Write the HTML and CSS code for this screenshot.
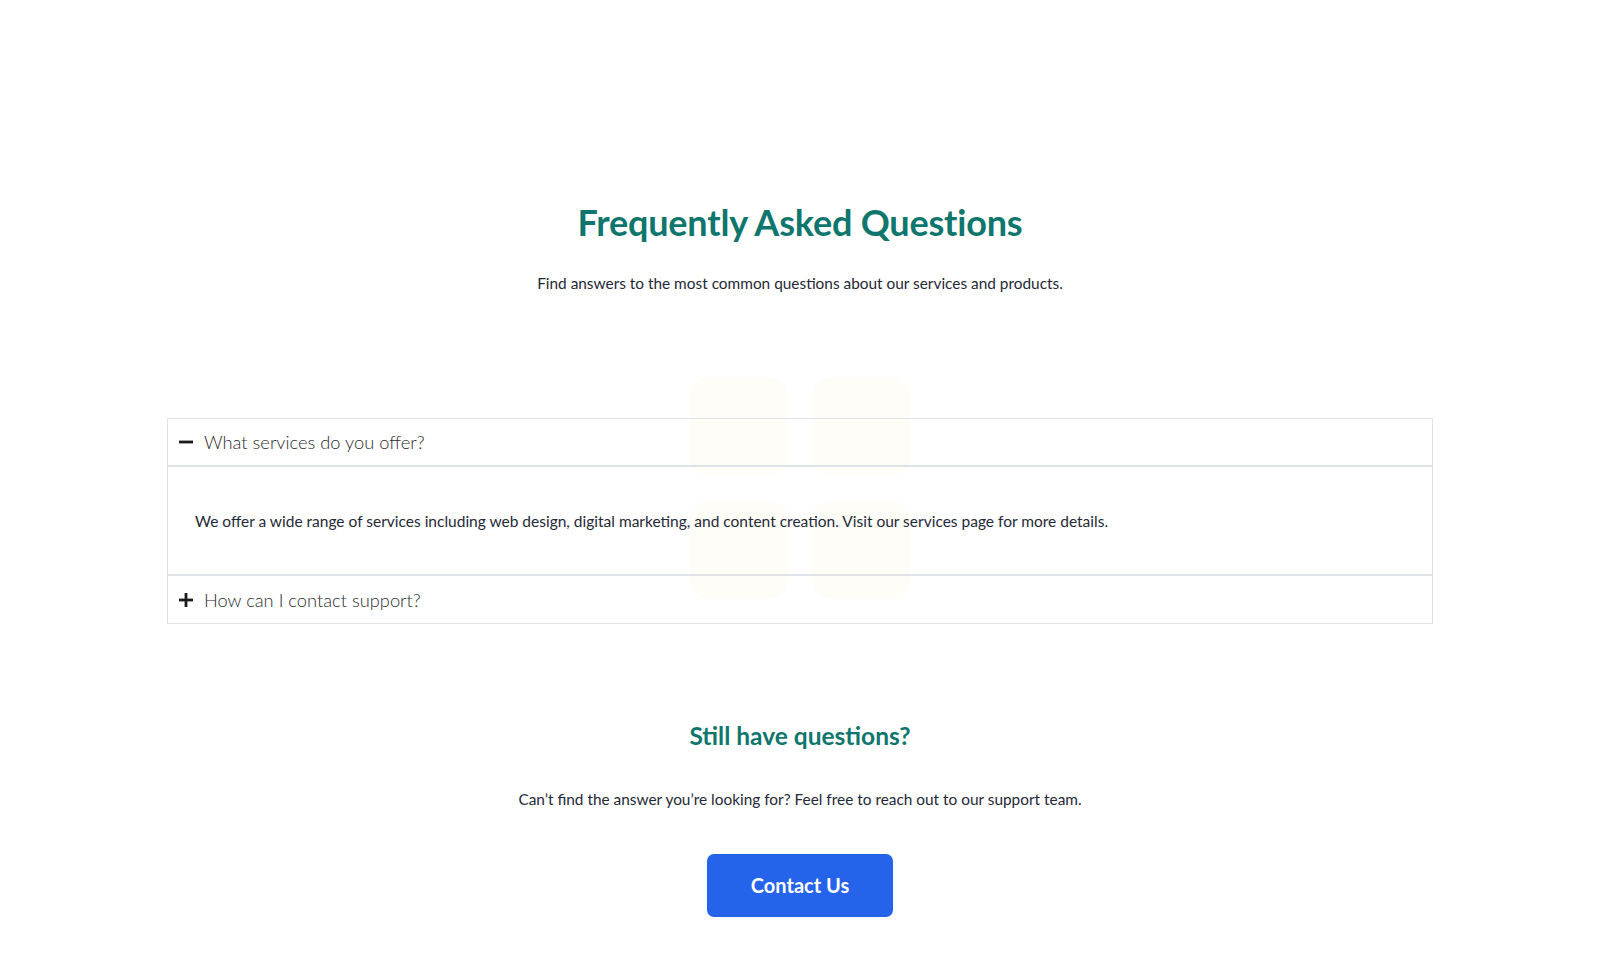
FILE: index.html
```html
<!DOCTYPE html>
<html lang="en">
<head>
<meta charset="utf-8">
<title>FAQ</title>
<link rel="stylesheet" href="styles.css">
</head>
<body>
<main class="page">
  <header class="intro">
    <h1 class="title">Frequently Asked Questions</h1>
    <p class="lead">Find answers to the most common questions about our services and products.</p>
  </header>

  <section class="faq">
    <div class="decor" aria-hidden="true">
      <span></span><span></span><span></span><span></span>
    </div>
    <div class="item open">
      <div class="q">
        <svg class="ico" viewBox="0 0 16 16" width="16" height="16"><rect x="1" y="6.6" width="14" height="2.8" fill="#1a1a1a"/></svg>
        <span>What services do you offer?</span>
      </div>
      <div class="a">
        <p>We offer a wide range of services including web design, digital marketing, and content creation. Visit our services page for more details.</p>
      </div>
    </div>
    <div class="item">
      <div class="q">
        <svg class="ico" viewBox="0 0 16 16" width="16" height="16"><rect x="1" y="6.6" width="14" height="2.8" fill="#1a1a1a"/><rect x="6.6" y="1" width="2.8" height="14" fill="#1a1a1a"/></svg>
        <span>How can I contact support?</span>
      </div>
    </div>
  </section>

  <section class="more">
    <h2 class="more-title">Still have questions?</h2>
    <p class="more-text">Can’t find the answer you’re looking for? Feel free to reach out to our support team.</p>
    <a class="btn" href="#">Contact Us</a>
  </section>
</main>
</body>
</html>
```

FILE: styles.css
```css
* { box-sizing: border-box; }
html, body { margin: 0; padding: 0; background: #ffffff; }
body {
  font-family: "Lato", "Open Sans", sans-serif;
  color: #1f2937;
}
.page {
  padding: 200px 167px 60px;
}
.intro { text-align: center; }
.title {
  margin: 0;
  font-size: 36px;
  line-height: 44px;
  font-weight: 700;
  color: #0f766e;
  letter-spacing: -0.2px;
}
.lead {
  margin: 20px 0 0;
  font-size: 15.4px;
  line-height: 38px;
}
.faq {
  position: relative;
  margin-top: 116px;
}
.decor {
  position: absolute;
  left: 50%;
  top: -41px;
  transform: translateX(-50%);
  display: grid;
  grid-template-columns: 99px 99px;
  grid-auto-rows: 99px;
  gap: 24px 23px;
  z-index: 0;
}
.decor span {
  background: #fefdf8;
  border-radius: 20px;
}
.item {
  position: relative;
  z-index: 1;
  border: 1px solid #dfe2e7;
}
.q {
  display: flex;
  align-items: center;
  gap: 10px;
  height: 47px;
  padding: 0 10px;
  font-size: 18.3px;
  font-weight: 300;
  color: #2b2b2b;
}
.item.open .q { border-bottom: 1px solid #dfe2e7; }
.item:not(.open) .q { height: 47px; }
.ico { flex: none; width: 16px; height: 16px; }
.a {
  border-top: 1px solid #dfe2e7;
  height: 108px;
  display: flex;
  align-items: center;
  padding: 0 27px;
}
.a p {
  margin: 0;
  font-size: 15.5px;
  line-height: 24px;
}
.more {
  text-align: center;
  margin-top: 94px;
}
.more-title {
  margin: 0;
  font-size: 24.5px;
  line-height: 36px;
  font-weight: 700;
  color: #0f766e;
}
.more-text {
  margin: 34px 0 0;
  font-size: 15.4px;
  line-height: 22px;
}
.btn {
  display: inline-block;
  margin-top: 44px;
  width: 186px;
  height: 63px;
  line-height: 63px;
  border-radius: 7px;
  background: #2563eb;
  color: #ffffff;
  font-size: 20px;
  font-weight: 700;
  text-decoration: none;
}
```
